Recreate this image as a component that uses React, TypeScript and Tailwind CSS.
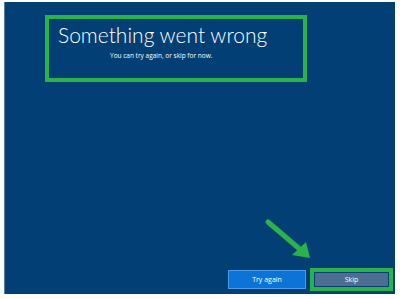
import React from "react";

const green = "border-[#2bb34b]";

const App = () => {
  return (
    <div
      className="w-[400px] h-[299px] bg-white pt-[2px] pl-[4px]"
      style={{ fontFamily: "'Open Sans', 'Liberation Sans', sans-serif" }}
    >
      <div className="relative w-[391px] h-[292px] bg-[#023f74] border-l border-[#5a7a9a] flex flex-col">
        <div className={`mt-[13px] ml-[40px] w-[262px] h-[67px] border-4 ${green} flex flex-col pl-[9px] pt-[2px]`}>
          <h1
            className="text-[21px] font-light text-white leading-[28px] whitespace-nowrap"
            style={{ fontFamily: "Lato, 'Open Sans', sans-serif" }}
          >
            Something went wrong
          </h1>
          <p className="text-[6.5px] text-white leading-[10px] ml-[52px] mt-[2px] whitespace-nowrap">
            You can try again, or skip for now.
          </p>
        </div>

        <div className="flex-1" />

        <div className="flex items-center justify-end gap-[4px] pr-[2px] pb-[3px]">
          <button className="w-[78px] h-[19px] bg-[#0b74d6] border border-[#4a9be6] text-white text-[7px] leading-none">
            Try again
          </button>
          <div className={`w-[83px] h-[23px] border-4 ${green} p-[1px] flex`}>
            <div className="flex-1 bg-[#4d6d92] text-white text-[7px] leading-none flex items-center justify-center">
              Skip
            </div>
          </div>
        </div>

        <svg
          className="absolute left-[259px] top-[216px]"
          width="50"
          height="45"
          viewBox="0 0 50 45"
        >
          <line x1="4" y1="4" x2="38" y2="33" stroke="#2bb34b" strokeWidth="5" strokeLinecap="round" />
          <polygon points="46,40 28,37 42,24" fill="#2bb34b" />
        </svg>
      </div>
    </div>
  );
};

export default App;
